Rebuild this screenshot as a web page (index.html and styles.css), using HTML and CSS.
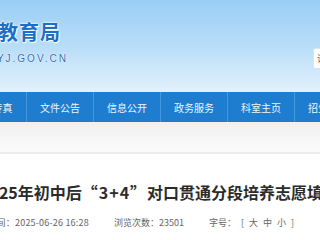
FILE: index.html
```html
<!DOCTYPE html>
<html lang="zh-CN">
<head>
<meta charset="utf-8">
<title>教育局</title>
<link rel="stylesheet" href="styles.css">
</head>
<body>
<div class="page">
  <header class="header">
    <div class="logo">
      <div class="logo-cn">某市教育局</div>
      <div class="logo-en">WWW.XXJYJ.GOV.CN</div>
    </div>
    <div class="search"><span class="search-text">请输入关键字</span></div>
  </header>
  <nav class="nav">
    <a class="nav-item">教育传真</a>
    <a class="nav-item">文件公告</a>
    <a class="nav-item">信息公开</a>
    <a class="nav-item">政务服务</a>
    <a class="nav-item">科室主页</a>
    <a class="nav-item">招生考试</a>
  </nav>
  <div class="crumb"></div>
  <main class="article">
    <h1 class="title">2025年初中后<span class="quote">“3+4”</span>对口贯通分段培养志愿填报指南</h1>
    <div class="meta">
      <span class="meta-item">发布时间：2025-06-26 16:28</span>
      <span class="meta-item">浏览次数：23501</span>
      <span class="meta-item">字号：<span class="fs">[</span><span class="fs">大</span><span class="fs">中</span><span class="fs">小</span><span class="fs">]</span></span>
    </div>
  </main>
</div>
</body>
</html>
```

FILE: styles.css
```css
html, body {
  margin: 0;
  padding: 0;
  width: 320px;
  height: 240px;
  overflow: hidden;
  background: #ffffff;
}

body {
  font-family: "Noto Sans CJK SC", "Noto Sans", sans-serif;
}

.page {
  width: 320px;
}

.header {
  height: 92px;
  background: linear-gradient(180deg, #9acef6 0%, #b8ddf8 50%, #e2f1fc 100%);
  display: flex;
  justify-content: space-between;
  align-items: flex-start;
}

.logo {
  width: 127px;
  margin-left: -66px;
  text-align: right;
  padding-top: 21px;
}

.logo-cn {
  font-size: 20px;
  font-weight: bold;
  line-height: 22px;
  letter-spacing: 1px;
  color: #1c6fc6;
  white-space: nowrap;
  text-shadow: 0 0 2px #ffffff, 0 0 2px #ffffff, 1px 1px 1px #ffffff;
}

.logo-en {
  margin-top: 11px;
  font-family: "Liberation Sans", Arial, sans-serif;
  font-size: 10px;
  line-height: 10px;
  letter-spacing: 2px;
  color: #2f6db0;
  white-space: nowrap;
  text-shadow: 0 0 2px #ffffff, 0 0 1px #ffffff;
}

.search {
  margin-top: 48px;
  margin-right: -80px;
  width: 87px;
  height: 21px;
  box-sizing: border-box;
  background: #ffffff;
  border: 1px solid #d6e5f0;
  border-radius: 2px;
  padding-left: 3px;
  font-size: 9px;
  line-height: 19px;
  color: #6b6258;
  white-space: nowrap;
  overflow: hidden;
}

.nav {
  display: flex;
  height: 30px;
  margin-left: -41px;
  background: #1f7dd0;
  overflow: hidden;
}

.nav-item {
  flex: 0 0 67px;
  box-sizing: border-box;
  padding-top: 2px;
  line-height: 28px;
  text-align: center;
  font-size: 10px;
  color: #eef6fd;
  border-left: 1px solid #4596dc;
  white-space: nowrap;
}

.nav-item:first-child {
  border-left: none;
}

.crumb {
  height: 30px;
  background: linear-gradient(180deg, #f0f0f0 0%, #fbfbfb 100%);
  border-bottom: 2px solid #ececec;
}

.article {
  padding-top: 28px;
}

.title {
  margin: 0 0 0 -20px;
  font-size: 16px;
  line-height: 20px;
  font-weight: bold;
  color: #2b2b2b;
  white-space: nowrap;
}

.quote {
  letter-spacing: 1px;
}

.meta {
  display: flex;
  gap: 25px;
  margin: 15px 0 0 -31px;
  font-size: 9px;
  line-height: 12px;
  color: #666666;
  white-space: nowrap;
}

.meta-item:first-child {
  letter-spacing: 0.2px;
}

.fs {
  margin-left: 5px;
}
```
